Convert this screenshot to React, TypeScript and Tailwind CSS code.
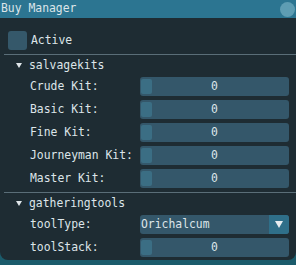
import React from "react";

type Row = { label: string; value: string };

const salvageKits: Row[] = [
  { label: "Crude Kit:", value: "0" },
  { label: "Basic Kit:", value: "0" },
  { label: "Fine Kit:", value: "0" },
  { label: "Journeyman Kit:", value: "0" },
  { label: "Master Kit:", value: "0" },
];

function Slider({ value }: { value: string }) {
  return (
    <div className="relative flex h-[19px] w-[149px] shrink-0 items-center justify-center rounded-[3px] bg-[#34576a]">
      <div className="absolute left-[1px] top-[2px] h-[15px] w-[11px] rounded-[2px] bg-[#3b6e84]" />
      <span className="relative">{value}</span>
    </div>
  );
}

function TreeHeader({ label }: { label: string }) {
  return (
    <div className="flex h-[22px] items-center pl-[16px]">
      <svg width="6" height="6" viewBox="0 0 6 6" className="mr-[7px]">
        <polygon points="0,0 6,0 3,5" fill="#dfe6ea" />
      </svg>
      <span>{label}</span>
    </div>
  );
}

function FieldRow({ label, children }: { label: string; children: React.ReactNode }) {
  return (
    <div className="flex items-center">
      <span className="w-[140px] shrink-0 whitespace-nowrap pl-[30px]">{label}</span>
      {children}
    </div>
  );
}

export default function App() {
  return (
    <div className="h-[265px] w-[296px] overflow-hidden bg-[#1b5b6b]">
      <div
        className="flex h-[260px] w-[296px] flex-col overflow-hidden rounded-b-[8px] bg-[#1e2c33] text-[11.4px] leading-none text-[#dde5e9]"
        style={{ fontFamily: '"DejaVu Sans Mono", "Liberation Mono", monospace' }}
      >
        <div className="flex h-[18px] shrink-0 items-center justify-between bg-[#2c7591] pl-[1px] pr-[1px]">
          <span>Buy Manager</span>
          <div className="h-[15px] w-[15px] rounded-full bg-[#5e9db3]" />
        </div>

        <div className="mt-[13px] flex items-center pl-[8px]">
          <div className="h-[19px] w-[19px] rounded-[3px] bg-[#35586a]" />
          <span className="ml-[4px]">Active</span>
        </div>

        <div className="ml-[4px] mt-[4px] h-px bg-[#5a6e78]" />

        <TreeHeader label="salvagekits" />

        <div className="flex flex-col gap-[4px]">
          {salvageKits.map((row) => (
            <FieldRow key={row.label} label={row.label}>
              <Slider value={row.value} />
            </FieldRow>
          ))}
        </div>

        <div className="ml-[4px] mt-[4px] h-px bg-[#5a6e78]" />

        <TreeHeader label="gatheringtools" />

        <div className="flex flex-col gap-[4px]">
          <FieldRow label="toolType:">
            <div className="flex h-[19px] w-[149px] shrink-0 items-center overflow-hidden rounded-[3px] bg-[#34576a]">
              <span className="flex-1 pl-[1px]">Orichalcum</span>
              <div className="flex h-full w-[20px] items-center justify-center bg-[#2f6f89]">
                <svg width="8" height="7" viewBox="0 0 8 7">
                  <polygon points="0,0 8,0 4,7" fill="#e6edf0" />
                </svg>
              </div>
            </div>
          </FieldRow>
          <FieldRow label="toolStack:">
            <Slider value="0" />
          </FieldRow>
        </div>
      </div>
    </div>
  );
}
